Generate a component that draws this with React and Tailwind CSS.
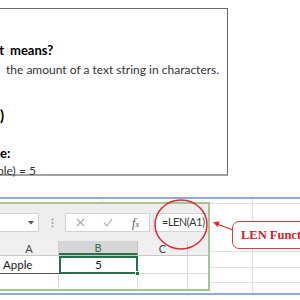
import React from "react";

// a line of text whose start lies off the left edge of the picture
function Cut({ hidden, shown, edge, className, shownClass = "" }) {
  return (
    <div className={"flex whitespace-pre " + className}>
      <div className={"flex justify-end shrink-0 " + edge}>
        <span className="shrink-0">{hidden}</span>
      </div>
      <span className={shownClass}>{shown}</span>
    </div>
  );
}

function GridRow({ h, last }) {
  return (
    <div className={"flex " + h + (last ? "" : " border-b border-[#e2e2e2]")}>
      <div className="w-[43px] border-r border-[#e2e2e2]" />
      <div className="flex-1" />
    </div>
  );
}

export default function App() {
  return (
    <div className="w-[300px] h-[300px] overflow-hidden bg-white font-['Lato',sans-serif]">
      {/* text card */}
      <div className="pt-[8px]">
        <div className="w-[228px] h-[168px] border-t border-r border-[#6b6b6b] border-b-2 border-b-[#a3a3a3] flex flex-col text-[#222]">
          <Cut
            className="mt-[35px] text-[13px] leading-none font-bold text-black"
            edge="w-[4px]"
            hidden="What it"
            shown="means?"
            shownClass="ml-[6px]"
          />
          <Cut
            className="mt-[7px] text-[12px] leading-none text-[#333]"
            edge="w-[0px]"
            hidden="The LEN function returns"
            shown="the amount of a text string in characters."
            shownClass="ml-[6px]"
          />
          <Cut
            className="mt-[32px] text-[15px] leading-none font-bold text-black"
            edge="w-[0px]"
            hidden="=LEN(text"
            shown=")"
          />
          <Cut
            className="mt-[24px] text-[13px] leading-none font-bold text-black"
            edge="w-[0px]"
            hidden="Exampl"
            shown="e:"
          />
          <Cut
            className="mt-[5px] -ml-[3px] text-[12px] leading-none text-[#333]"
            edge="w-[0px]"
            hidden="=LEN(Ap"
            shown="ple) = 5"
          />
        </div>
      </div>

      <div className="h-[21px]" />
      <div className="h-[2px] bg-[#8eaadb]" />

      {/* sheet screenshot */}
      <div className="relative flex h-[94px]">
        <div className="w-[210px] flex flex-col">
          <div className="h-[3px] flex">
            <div className="w-[103px] border-r border-[#e2e2e2]" />
          </div>
          <div className="h-[89px] border-y-2 border-r-2 border-[#a9c48f] flex flex-col bg-white">
            {/* formula bar */}
            <div className="h-[37px] bg-[#eeeeee] flex items-center">
              <div className="w-[39px] h-[19px] bg-white border-y border-r border-[#d4d4d4] flex items-center justify-end pr-[4px]">
                <svg width="6" height="4" viewBox="0 0 6 4">
                  <polygon points="0,0 6,0 3,3.5" fill="#555" />
                </svg>
              </div>
              <div className="w-[26px] flex justify-center">
                <svg width="3" height="10" viewBox="0 0 3 10">
                  <circle cx="1.5" cy="1.5" r="1" fill="#999" />
                  <circle cx="1.5" cy="5" r="1" fill="#999" />
                  <circle cx="1.5" cy="8.5" r="1" fill="#999" />
                </svg>
              </div>
              <div className="w-[85px] h-[19px] bg-white border border-[#d4d4d4] flex items-center">
                <div className="w-[28px] flex justify-center">
                  <svg width="9" height="9" viewBox="0 0 9 9">
                    <path d="M1 1 L8 8 M8 1 L1 8" stroke="#a8a8a8" strokeWidth="1.1" />
                  </svg>
                </div>
                <div className="w-[28px] flex justify-center">
                  <svg width="10" height="9" viewBox="0 0 10 9">
                    <path d="M1 5 L4 8 L9 1" stroke="#a8a8a8" strokeWidth="1.1" fill="none" />
                  </svg>
                </div>
                <div className="flex-1 flex justify-center font-['Liberation_Serif',serif] italic text-[12px] leading-none text-[#555]">
                  f<span className="text-[8px] mt-[4px]">x</span>
                </div>
              </div>
              <div className="ml-[3px] flex-1 h-[19px] bg-white border-y border-l border-[#d4d4d4] flex items-center pl-[8px] text-[10.5px] tracking-[-0.2px] text-[#333] whitespace-nowrap">
                =LEN(A1)
              </div>
            </div>
            {/* column headers */}
            <div className="h-[15px] flex bg-[#f0f0f0] border-b border-[#c8c8c8] text-[11px] leading-none text-[#444]">
              <div className="w-[59px] border-r border-[#d0d0d0] flex items-center justify-center">A</div>
              <div className="w-[79px] bg-[#d6d6d6] border-r border-[#c0c0c0] border-b-2 border-b-[#217346] flex items-center justify-center text-[#356d4a]">
                B
              </div>
              <div className="w-[50px] border-r border-[#d0d0d0] flex items-center justify-center">C</div>
              <div className="flex-1" />
            </div>
            {/* row 1 */}
            <div className="h-[18px] flex text-[12px] leading-none text-[#222]">
              <div className="w-[59px] border-b border-[#555] flex items-center pl-[3px] text-[11.5px]">Apple</div>
              <div className="relative w-[79px] border-2 border-[#217346] flex items-center justify-center">
                5
                <div className="absolute -right-[4px] -bottom-[4px] w-[5px] h-[5px] bg-[#217346] border border-white" />
              </div>
              <div className="w-[50px] border-r border-b border-[#dadada]" />
              <div className="flex-1 border-b border-[#dadada]" />
            </div>
            {/* row 2 */}
            <div className="flex-1 flex">
              <div className="w-[59px] border-r border-[#dadada]" />
              <div className="w-[79px] border-r border-[#dadada]" />
              <div className="w-[50px] border-r border-[#dadada]" />
              <div className="flex-1" />
            </div>
          </div>
          <div className="h-[2px]" />
        </div>

        {/* sheet grid behind, right side */}
        <div className="flex-1 flex flex-col">
          <GridRow h="h-[5px]" />
          <GridRow h="h-[48px]" />
          <GridRow h="h-[16px]" />
          <GridRow h="h-[15px]" />
          <GridRow h="flex-1" last />
        </div>

        {/* annotation */}
        <svg className="absolute left-0 top-0 overflow-visible pointer-events-none" width="300" height="94">
          <ellipse cx="181" cy="25.5" rx="26" ry="24.5" fill="none" stroke="#e3262b" strokeWidth="1.5" />
          <line x1="233" y1="31" x2="217" y2="25" stroke="#e3262b" strokeWidth="1.3" />
          <polygon points="213,23 219.7,22.4 217.5,28" fill="#e3262b" />
        </svg>
        <div className="absolute left-[232px] top-[22px] w-[80px] h-[28px] bg-white border-[1.5px] border-[#e3393e] rounded-[7px] flex items-center pl-[8px] font-['Liberation_Serif',serif] font-bold text-[12.5px] text-[#d4202a] whitespace-nowrap">
          LEN Function
        </div>
      </div>

      <div className="h-[2px] bg-[#8eaadb]" />
    </div>
  );
}
